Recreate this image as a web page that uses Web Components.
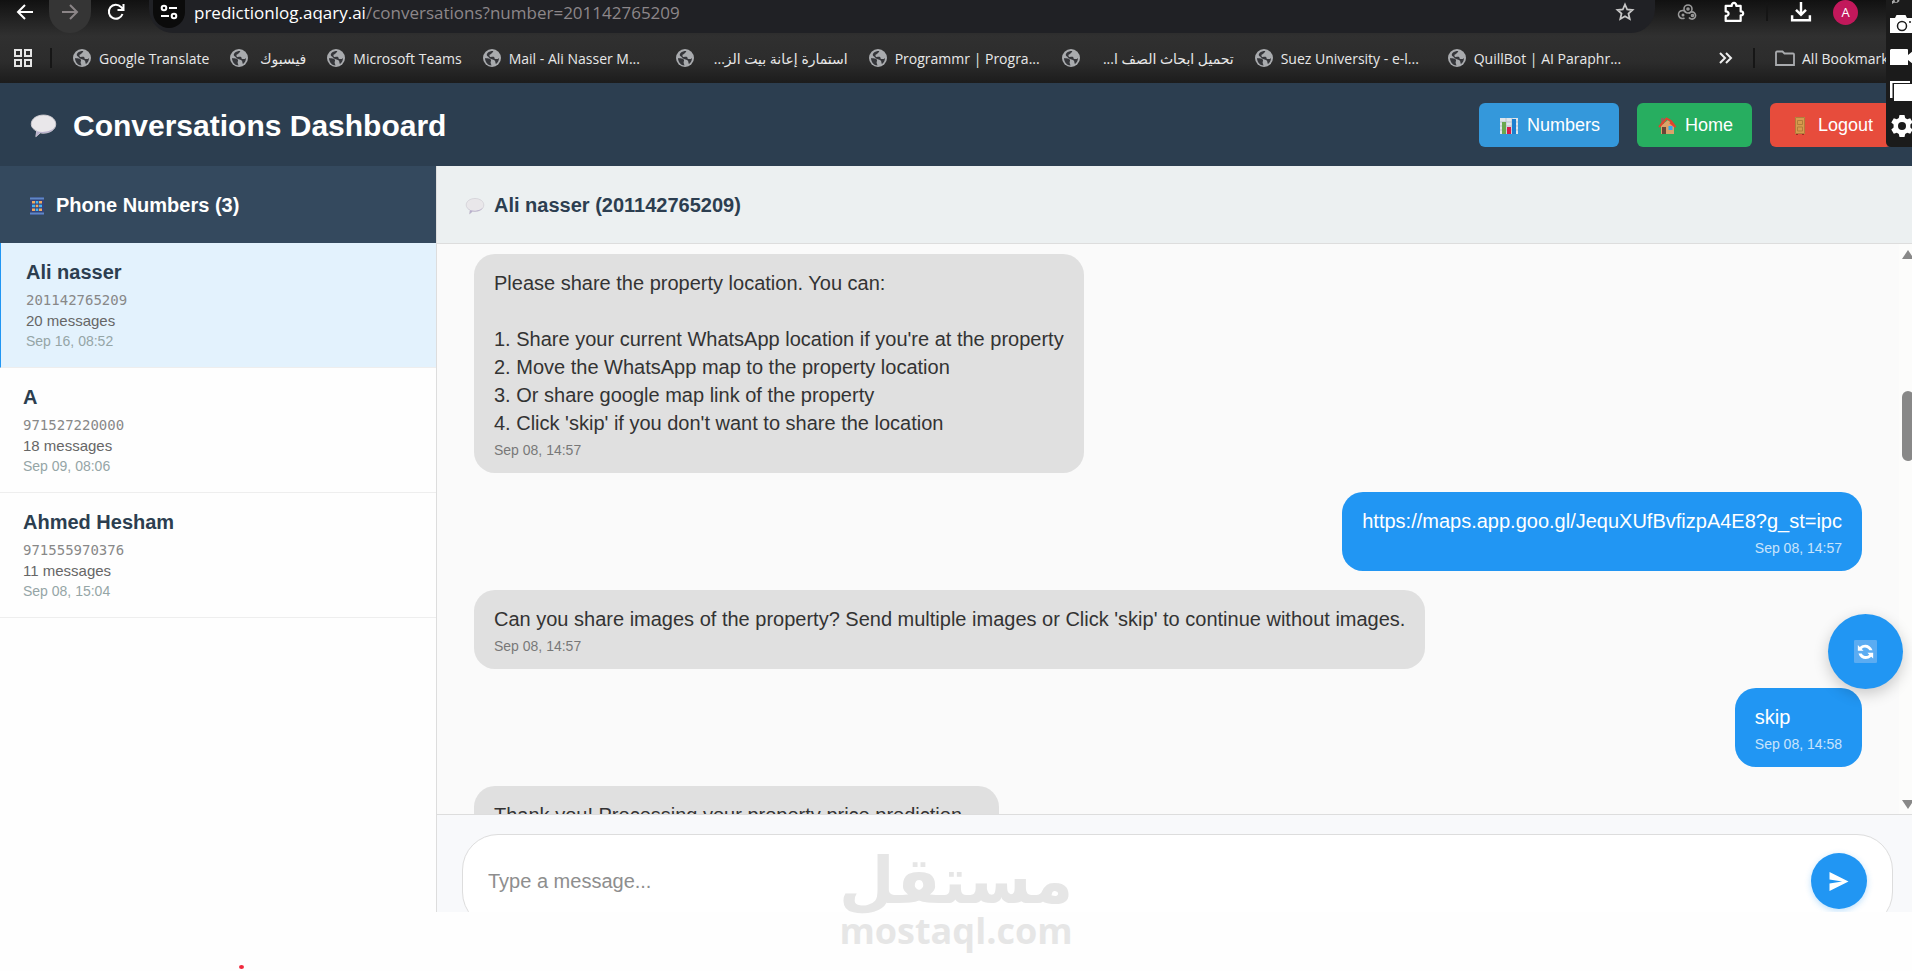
<!DOCTYPE html>
<html lang="en">
<head>
<meta charset="utf-8">
<title>Conversations Dashboard</title>
<style>
  body {
    margin: 0;
    height: 100vh;
    overflow: hidden;
    position: relative;
    display: grid;
    grid-template-rows: auto minmax(0, 1fr) 59px;
    background: #fefefe;
    font-family: "Liberation Sans", Arial, sans-serif;
    color: #333;
  }
</style>
</head>
<body>
  <browser-bar></browser-bar>
  <chat-dashboard></chat-dashboard>
  <site-watermark></site-watermark>
  <capture-panel></capture-panel>
  <record-dot></record-dot>

<script>
"use strict";

  const icons = {
    back: '<path d="M17 9H2M9 2L2 9l7 7" fill="none" stroke="#fff" stroke-width="2"/>',
    forward: '<path d="M1 9h15M9 2l7 7-7 7" fill="none" stroke="#8b8587" stroke-width="2"/>',
    reload: '<path d="M15.500 11A7 7 0 1 1 14 4l2 2.500M16.500 1v6h-6" fill="none" stroke="#fff" stroke-width="2"/>',
    tune: '<g fill="none" stroke="#fff" stroke-width="2"><circle cx="4" cy="5" r="2.300"/><path d="M9 5h8M1 13h8"/><circle cx="14" cy="13" r="2.300"/></g>',
    star: '<path d="M9 1.500l2.200 5 5.300.5-4 3.600 1.200 5.400L9 13.200 4.300 16l1.200-5.400-4-3.600 5.300-.5z" fill="none" stroke="#c7c7c7" stroke-width="1.800"/>',
    webhook: '<g fill="none" stroke="#9a9a9a" stroke-width="1.600"><circle cx="9" cy="6" r="4"/><circle cx="9" cy="6" r="1"/><path d="M5.500 15A4 4 0 1 1 7 9.500M10 10.500a3.600 3.600 0 1 1 0 4"/><circle cx="4" cy="12" r=".7"/><circle cx="13.500" cy="12.500" r="1"/></g>',
    puzzle: '<path d="M1.500 3.500h5.500c-.5-3.500 4.500-3.500 4 0H15v5c3-.5 3 4 0 3.500v5H1.500v-4.500c3.500.3 3.500-4.300 0-4z" fill="none" stroke="#fff" stroke-width="2" stroke-linejoin="round"/>',
    download: '<path d="M9 0v11M4.500 7L9 11.500 13.500 7M1 12v4.500h16V12" fill="none" stroke="#fff" stroke-width="2.200"/>',
    apps: '<path d="M1 1h6v6H1zM11 1h6v6h-6zM1 11h6v6H1zM11 11h6v6h-6z" fill="none" stroke="#e6e6e6" stroke-width="2"/>',
    globe: '<circle cx="9" cy="9" r="9" fill="#a9abae"/><path d="M2 9c2 .5 5 0 6 2 .4 1-1 2 0 4l.5 1.500C5 16.500 2 13 2 9zM4.500 4C6 2.500 8 2 10 2c1 1-1 1.500-1.500 2.500S6 5 6.500 7 10 7 11 8s0 2 2 2 2 0 3-1c0 3-1.500 5-3 6-1-1 0-3-2-4s-4-1-5-2.500S2.500 7 4.500 4z" fill="#35363a"/>',
    more: '<path d="M3 4l5 5-5 5M9 4l5 5-5 5" fill="none" stroke="#eee" stroke-width="2"/>',
    folder: '<path d="M0 16V3.500a1 1 0 0 1 1-1h5.500l2 2H17a1 1 0 0 1 1 1V16z" fill="none" stroke="#a9abae" stroke-width="1.800"/>',
    bubble: '<path d="M9 1.500c5 0 8.800 2.800 8.800 6.500s-3.800 6.500-8.800 6.500c-.8 0-1.500 0-2.300-.2L3.500 17l.6-4C1.700 11.800.2 10.300.2 8c0-3.700 3.800-6.500 8.800-6.500z" fill="#e9e7ea" stroke="#cfccd2" stroke-width=".7"/><path d="M1 11c2 2.200 6 3.200 10 2.400 2.500-.5 4.600-1.500 5.900-3-1.200 2.500-4.500 4.100-7.900 4.100-.8 0-1.500 0-2.300-.2L3.500 17l.6-4c-1.200-.6-2.400-1.300-3.100-2z" fill="#b8b0cc"/>',
    phone: '<rect x="2" y="0" width="14" height="18" rx="1.500" fill="#33437a"/><path d="M2 1.500h14M2 16.500h14" stroke="#5f87c5" stroke-width="2"/><g fill="#f0a860"><rect x="4" y="4" width="3" height="2.500"/><rect x="11" y="4" width="3" height="2.500"/><rect x="7.700" y="7.700" width="2.600" height="2.500"/><rect x="4" y="11.500" width="3" height="2.500"/><rect x="11" y="11.500" width="3" height="2.500"/></g><g fill="#42b5f5"><rect x="7.700" y="4" width="2.600" height="2.500"/><rect x="4" y="7.700" width="3" height="2.500"/><rect x="11" y="7.700" width="3" height="2.500"/><rect x="7.700" y="11.500" width="2.600" height="2.500"/></g>',
    chart: '<rect x="0" y="1" width="18" height="16" fill="#dfe6ec"/><path d="M0 5h18M0 9h18M0 13h18M6 1v16M12 1v16" stroke="#b6c4cf"/><rect x="2" y="5" width="4" height="12" fill="#6aa84f"/><rect x="7" y="10" width="4" height="7" fill="#d81b4a"/><rect x="12" y="2" width="4" height="15" fill="#1b7fd0"/>',
    house: '<path d="M3 8.500L10 3l6 5.500V17H3z" fill="#dda26a"/><rect x="3" y="1" width="3" height="6" fill="#8a6a5e"/><path d="M1 10L8.500 1.500 13 4l4.500 6-5.500-4.500" fill="none" stroke="#e2432e" stroke-width="2"/><rect x="4" y="10" width="4" height="7" fill="#6b4537"/><rect x="10.500" y="9" width="4" height="4" fill="#35a7f0"/>',
    door: '<rect x="4" y="0" width="10" height="17" fill="#d79a4e"/><path d="M4.500.5h9v16h-9zM6.500 3.500h5v4h-5zM6.500 10h5v4h-5z" fill="none" stroke="#b17c3b"/><path d="M5 17.500h2M11 17.500h2" stroke="#a02a25"/>',
    refresh: '<rect width="18" height="18" rx="1" fill="#5bacf2"/><path d="M3 4v4.500h4.500L6 7c1.800-1.700 4.500-1.300 6 1h2.500C13 3.500 8 2.200 4.500 5.400zM15 14.500V10h-4.500l1.500 1.500c-1.800 1.700-4.500 1.300-6-1H3.500C5 15 10 16.300 13.500 13.100z" fill="#fff"/>',
    send: '<path d="M0 0l18 9-18 9v-7l12-2L0 7z" fill="#fff"/>',
    camera: '<path d="M0 3h5l1.500-3h9L17 3h6v15H0z" fill="#fff"/><circle cx="12" cy="11" r="4.500" fill="none" stroke="#1b1b1b" stroke-width="1.500"/><path d="M19 7h2" stroke="#1b1b1b" stroke-width="1.500"/>',
    video: '<path d="M1 1h16q1 0 1 1v5l6-5v15l-6-5v5H0V2z" fill="#fff"/>',
    windows: '<path d="M0 17V0h20v2H2.500v15z" fill="#fff"/><path d="M4 3h20v17H4z" fill="#fff"/>',
    gear: '<path d="M9.500 1h5l.7 3 2 1.200 3-1 2.500 4.300-2.300 2v3l2.300 2-2.500 4.300-3-1-2 1.200-.7 3h-5l-.7-3-2-1.200-3 1-2.500-4.300 2.300-2v-3l-2.300-2 2.500-4.300 3 1 2-1.200z" fill="#fff"/><circle cx="12" cy="12" r="4" fill="#1b1b1b"/>',
    clip: '<path d="M2 0h9v2l-3 2H3L0 6V2z" fill="#aaa"/><circle cx="6" cy="1" r="2" fill="#1b1b1b"/>'
  };

  const boxes = { camera: "0 0 24 18", video: "0 0 24 18", windows: "0 0 24 20", gear: "0 0 24 24", clip: "0 0 12 6" };

  // small helper, every element here is built the same way
  function define(name, html) {
    window.customElements.define(name, class extends HTMLElement {
      constructor() {
        super();
        const template = document.createElement("template");
        template.innerHTML = typeof html === "function" ? html(this) : html;
        this.attachShadow({ mode: "open" }).appendChild(template.content.cloneNode(true));
      }
    });
  }

  // <ui-icon name="globe">, sized with --w and --h
  define("ui-icon", (el) => {
    const name = el.getAttribute("name");
    return `
      <style>
        :host { display: inline-flex; flex: none; width: var(--w, 18px); height: var(--h, 18px); }
        svg { display: block; width: 100%; height: 100%; overflow: visible; }
      </style>
      <svg viewBox="${boxes[name] || "0 0 18 18"}" aria-hidden="true">${icons[name]}</svg>
    `;
  });

  define("bookmark-link", (el) => `
    <style>
      :host { display: block; flex: none; min-width: 76px; }
      :host([wide]) { width: 172px; }
      a { display: flex; align-items: center; gap: 8px; color: #e8e8e8; text-decoration: none; white-space: nowrap; }
      span { flex: 1; }
    </style>
    <a href="#"><ui-icon name="${el.getAttribute("icon") || "globe"}"></ui-icon><span dir="${el.getAttribute("lang") === "ar" ? "rtl" : "ltr"}"><slot></slot></span></a>
  `);

  define("browser-bar", `
    <style>
      :host {
        display: block;
        overflow: hidden;
        background: linear-gradient(#111 0, #262626 24px, #303030 36px, #2c2c2c 62px, #1c1c1c 83px);
        font-family: "Open Sans", "Noto Sans", "DejaVu Sans", sans-serif;
        font-size: 14px;
      }
      button { all: unset; display: flex; align-items: center; justify-content: center; box-sizing: border-box; height: 24px; }
      .address { display: flex; height: 33px; padding-left: 16px; }
      .forward { width: 42px; height: 33px; padding-bottom: 9px; margin: 0 16px 0 15px; background: #353535; border-radius: 0 0 21px 21px; }
      .omnibox { flex: 1; display: flex; height: 33px; box-sizing: border-box; margin-left: 24px; padding: 0 21px 9px 4px; background: #202125; border-radius: 0 0 24px 24px; }
      .tune { width: 32px; height: 28px; padding-bottom: 4px; background: #0b0b0b; border-radius: 0 0 16px 16px; }
      .url { flex: 1; padding-left: 9px; font-size: 17px; line-height: 26px; color: #8d878a; text-decoration: none; }
      .url b { font-weight: 400; color: #fff; }
      .tools { display: flex; align-items: center; height: 24px; padding: 0 54px 0 24px; }
      .tools .big { --w: 20px; --h: 20px; }
      .tools i { width: 2px; height: 18px; margin: 0 23px 0 22px; background: #151515; }
      .avatar { width: 25px; margin-left: 22px; border-radius: 50%; background: #c2185b; color: #fff; font-size: 13px; height: 25px; }
      .ext { margin-right: 27px; }
      .marks { display: flex; align-items: center; height: 50px; padding-left: 14px; gap: 21px; }
      .marks > i { width: 2px; height: 20px; margin-left: -3px; background: #161616; }
      .more { margin-left: auto; --w: 18px; }
      .all { width: 136px; }
    </style>
    <div class="address">
      <button aria-label="Back"><ui-icon name="back"></ui-icon></button>
      <button class="forward" aria-label="Forward"><ui-icon name="forward"></ui-icon></button>
      <button aria-label="Reload"><ui-icon name="reload"></ui-icon></button>
      <div class="omnibox">
        <button class="tune" aria-label="Site information"><ui-icon name="tune"></ui-icon></button>
        <a class="url" href="#"><b>predictionlog.aqary.ai</b>/conversations?number=201142765209</a>
        <button aria-label="Bookmark this page"><ui-icon name="star"></ui-icon></button>
      </div>
      <div class="tools">
        <button class="ext" aria-label="Webhooks"><ui-icon name="webhook"></ui-icon></button>
        <button aria-label="Extensions"><ui-icon class="big" name="puzzle"></ui-icon></button>
        <i></i>
        <button aria-label="Downloads"><ui-icon class="big" name="download"></ui-icon></button>
        <button class="avatar">A</button>
      </div>
    </div>
    <nav class="marks">
      <button aria-label="Apps"><ui-icon name="apps"></ui-icon></button>
      <i></i>
      <bookmark-link>Google Translate</bookmark-link>
      <bookmark-link lang="ar">فيسبوك</bookmark-link>
      <bookmark-link>Microsoft Teams</bookmark-link>
      <bookmark-link wide>Mail - Ali Nasser M...</bookmark-link>
      <bookmark-link wide lang="ar">استمارة إعانة بيت الز...</bookmark-link>
      <bookmark-link wide>Programmr | Progra...</bookmark-link>
      <bookmark-link wide lang="ar">تحميل ابحاث الصف ا...</bookmark-link>
      <bookmark-link wide>Suez University - e-l...</bookmark-link>
      <bookmark-link wide>QuillBot | AI Paraphr...</bookmark-link>
      <button class="more" aria-label="More bookmarks"><ui-icon name="more"></ui-icon></button>
      <i></i>
      <bookmark-link class="all" icon="folder">All Bookmarks</bookmark-link>
    </nav>
  `);

  define("nav-button", (el) => `
    <style>
      :host { display: block; }
      a {
        display: flex;
        align-items: center;
        gap: 9px;
        box-sizing: border-box;
        height: 44px;
        padding: 2px 19px 0 21px;
        border-radius: 6px;
        background: var(--bg);
        color: #fff;
        font-size: 18px;
        text-decoration: none;
      }
    </style>
    <a href="#"><ui-icon name="${el.getAttribute("icon")}"></ui-icon><span><slot></slot></span></a>
  `);

  define("phone-item", (el) => `
    <style>
      :host { display: block; padding: 17px 23px; border-bottom: 1px solid #eee; }
      :host([active]) { padding-left: 25px; background: #e3f2fd; border-left: 1px solid #2196f3; }
      div { font-size: 15px; line-height: 22px; color: #666; }
      .name { margin-bottom: 6px; font-size: 20px; line-height: 24px; font-weight: 700; color: #2c3e50; }
      .number { font-family: "DejaVu Sans Mono", monospace; font-size: 14px; line-height: 20px; color: #888; }
      .date { font-size: 14px; line-height: 18px; color: #95a5a6; }
    </style>
    <div class="name"><slot></slot></div>
    <div class="number">${el.getAttribute("number")}</div>
    <div>${el.getAttribute("count")} messages</div>
    <div class="date">${el.getAttribute("date")}</div>
  `);

  define("chat-message", (el) => `
    <style>
      :host { display: block; align-self: flex-start; flex: none; padding: 15px 20px; border-radius: 21px; background: #e0e0e0; color: #333; }
      :host([sent]) { align-self: flex-end; background: #2196f3; color: #fff; }
      p { margin: 0; font-size: 20px; line-height: 28px; white-space: pre-line; }
      time { display: block; margin-top: 5px; font-size: 14px; line-height: 16px; opacity: .6; }
      :host([sent]) time { text-align: right; opacity: .75; }
    </style>
    <p><slot></slot></p>
    <time>${el.getAttribute("date")}</time>
  `);

  define("message-composer", `
    <style>
      :host { display: block; height: 98px; overflow: hidden; box-sizing: border-box; padding: 19px 19px 0 25px; border-top: 1px solid #ddd; background: #f8f9fb; }
      form { display: flex; align-items: center; box-sizing: border-box; height: 94px; padding: 0 25px; background: #fff; border: 1px solid #ddd; border-radius: 36px; }
      input { flex: 1; border: 0; outline: 0; padding: 0; font: 20px/28px "Liberation Sans", Arial, sans-serif; background: none; }
      input::placeholder { color: #8e8e8e; }
      button { display: flex; align-items: center; justify-content: center; width: 56px; height: 56px; border: 0; border-radius: 50%; background: #2196f3; box-shadow: 0 2px 6px rgba(33, 150, 243, .3); --w: 22px; --h: 19px; }
    </style>
    <form>
      <input type="text" placeholder="Type a message..." aria-label="Message">
      <button type="button" aria-label="Send"><ui-icon name="send"></ui-icon></button>
    </form>
  `);

  define("refresh-button", `
    <style>
      :host { position: absolute; right: 9px; bottom: 223px; }
      button { display: flex; align-items: center; justify-content: center; width: 75px; height: 75px; border: 0; border-radius: 50%; background: #2196f3; box-shadow: 0 5px 15px rgba(0, 0, 0, .2); --w: 23px; --h: 23px; }
    </style>
    <button aria-label="Refresh"><ui-icon name="refresh"></ui-icon></button>
  `);

  define("chat-scrollbar", `
    <style>
      :host { position: absolute; right: 0; top: 0; bottom: 0; width: 13px; background: #fcfcfb; overflow: hidden; }
      i { position: absolute; left: 3px; width: 12px; }
      .up { top: 6px; border: solid transparent; border-width: 0 6px 9px; border-bottom-color: #888; width: 0; }
      .down { bottom: 5px; border: solid transparent; border-width: 9px 6px 0; border-top-color: #888; width: 0; }
      .thumb { top: 147px; height: 70px; border-radius: 6px; background: #888; }
    </style>
    <i class="up"></i><i class="thumb"></i><i class="down"></i>
  `);

  define("chat-dashboard", `
    <style>
      :host { position: relative; display: grid; grid-template: 83px minmax(0, 1fr) / 437px minmax(0, 1fr); }
      header { grid-column: 1 / 3; display: flex; align-items: center; gap: 18px; padding: 0 20px 0 29px; background: #2c3e50; color: #fff; }
      h1 { flex: 1; display: flex; align-items: center; gap: 15px; margin: 0; padding-top: 2px; font-size: 30px; --w: 29px; --h: 25px; }
      h2 { display: flex; align-items: center; box-sizing: border-box; height: 77px; margin: 0; padding-top: 2px; font-size: 20px; }
      aside { border-right: 1px solid #ddd; background: #fefefe; }
      aside h2 { gap: 10px; padding-left: 28px; background: #34495e; color: #fff; --h: 20px; }
      main { display: flex; flex-direction: column; min-height: 0; background: #fafafa; }
      main h2 { gap: 10px; height: 78px; padding-left: 29px; border-bottom: 1px solid #ddd; background: #ecf0f1; color: #2c3e50; --w: 18px; --h: 18px; }
      .list { flex: 1; min-height: 0; overflow: hidden; position: relative; }
      .log { display: flex; flex-direction: column; gap: 19px; padding: 10px 50px 0 37px; }
    </style>
    <header>
      <h1><ui-icon name="bubble"></ui-icon><span>Conversations Dashboard</span></h1>
      <nav-button icon="chart" style="--bg: #3498db">Numbers</nav-button>
      <nav-button icon="house" style="--bg: #27ae60">Home</nav-button>
      <nav-button icon="door" style="--bg: #e74c3c">Logout</nav-button>
    </header>
    <aside>
      <h2><ui-icon name="phone"></ui-icon><span>Phone Numbers (3)</span></h2>
      <phone-item active number="201142765209" count="20" date="Sep 16, 08:52">Ali nasser</phone-item>
      <phone-item number="971527220000" count="18" date="Sep 09, 08:06">A</phone-item>
      <phone-item number="971555970376" count="11" date="Sep 08, 15:04">Ahmed Hesham</phone-item>
    </aside>
    <main>
      <h2><ui-icon name="bubble"></ui-icon><span>Ali nasser (201142765209)</span></h2>
      <div class="list">
        <div class="log">
          <chat-message date="Sep 08, 14:57">Please share the property location. You can:

1. Share your current WhatsApp location if you're at the property
2. Move the WhatsApp map to the property location
3. Or share google map link of the property
4. Click 'skip' if you don't want to share the location</chat-message>
          <chat-message sent date="Sep 08, 14:57">https://maps.app.goo.gl/JequXUfBvfizpA4E8?g_st=ipc</chat-message>
          <chat-message date="Sep 08, 14:57">Can you share images of the property? Send multiple images or Click 'skip' to continue without images.</chat-message>
          <chat-message sent date="Sep 08, 14:58">skip</chat-message>
          <chat-message date="Sep 08, 14:58">Thank you! Processing your property price prediction...</chat-message>
        </div>
        <chat-scrollbar></chat-scrollbar>
      </div>
      <message-composer></message-composer>
    </main>
    <refresh-button></refresh-button>
  `);

  // watermark lies over the composer and the strip under the page
  define("site-watermark", `
    <style>
      :host { position: absolute; left: 50%; bottom: 20px; transform: translateX(-50%); text-align: center; color: #e6e6e6; pointer-events: none; }
      .ar { font: 700 64px/60px "DejaVu Sans", sans-serif; }
      .en { font: 700 36px/40px "Open Sans", sans-serif; }
    </style>
    <div class="ar" lang="ar" dir="rtl">مستقل</div>
    <div class="en">mostaql.com</div>
  `);

  define("capture-panel", `
    <style>
      :host { position: absolute; top: 0; right: 0; width: 26px; height: 147px; overflow: hidden; background: #1b1b1b; border-bottom-left-radius: 5px; }
      div { display: flex; flex-direction: column; align-items: flex-start; gap: 15px; padding-left: 4px; --w: 24px; }
      .clip { --w: 12px; --h: 4px; margin-bottom: -4px; }
      .camera, .video { --h: 18px; }
      .windows { --h: 20px; }
      .gear { --h: 24px; margin-top: -2px; }
    </style>
    <div>
      <ui-icon class="clip" name="clip"></ui-icon>
      <ui-icon class="camera" name="camera"></ui-icon>
      <ui-icon class="video" name="video"></ui-icon>
      <ui-icon class="windows" name="windows"></ui-icon>
      <ui-icon class="gear" name="gear"></ui-icon>
    </div>
  `);

  define("record-dot", `
    <style>
      :host { position: absolute; left: 239px; bottom: 2px; width: 5px; height: 4px; border-radius: 50%; background: #f0283c; }
    </style>
  `);
</script>
</body>
</html>
